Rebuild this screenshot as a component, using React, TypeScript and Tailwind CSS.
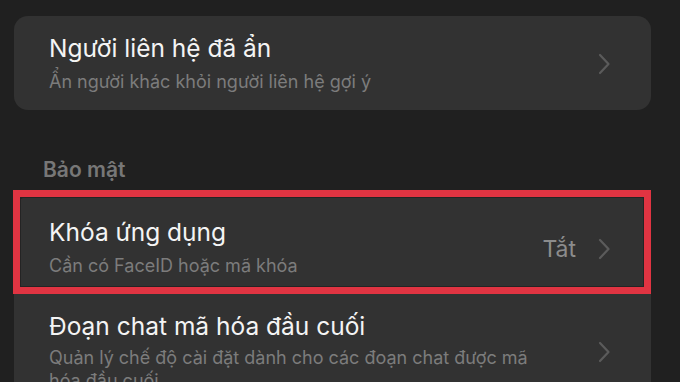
import React from "react";

function Chevron() {
  return (
    <svg width="14" height="22" viewBox="0 0 14 22" fill="none" className="shrink-0">
      <path d="M3 2 L11.5 11 L3 20" stroke="#5b5b5b" strokeWidth="2.2" strokeLinecap="round" strokeLinejoin="round" />
    </svg>
  );
}

export default function App() {
  return (
    <div
      className="w-[680px] h-[382px] overflow-hidden bg-[#202020] pt-[16px]"
      style={{ fontFamily: "Inter, 'Noto Sans', sans-serif" }}
    >
      {/* Card 1 */}
      <div className="ml-[14px] w-[637px] rounded-[14px] bg-[#323232] flex items-center pl-[35px] pr-[40px] pt-[17px] pb-[16px]">
        <div className="flex-1 flex flex-col">
          <div className="text-[24.5px] leading-[30px] text-[#f4f4f4]">Người liên hệ đã ẩn</div>
          <div className="mt-[7px] text-[18px] leading-[24px] text-[#7c7c7c]">Ẩn người khác khỏi người liên hệ gợi ý</div>
        </div>
        <Chevron />
      </div>

      {/* Section header */}
      <div className="mt-[48px] mb-[15px] pl-[43px] text-[21px] leading-[24px] font-semibold text-[#777777]">Bảo mật</div>

      {/* Card 2 */}
      <div className="ml-[14px] w-[637px] rounded-[14px] bg-[#323232] flex flex-col">
        <div className="relative flex items-center pl-[35px] pr-[40px] pt-[20px] pb-[16px]">
          <div className="flex-1 flex flex-col">
            <div className="text-[24.5px] leading-[30px] text-[#f4f4f4]">Khóa ứng dụng</div>
            <div className="mt-[7px] text-[18px] leading-[24px] text-[#7c7c7c]">Cần có FaceID hoặc mã khóa</div>
          </div>
          <div className="flex items-center gap-[21px] mt-[2px]">
            <span className="text-[23px] leading-[28px] text-[#8c8c8c]">Tắt</span>
            <Chevron />
          </div>
          <div className="absolute top-[-7px] left-[-1px] right-0 bottom-0 border-[7px] border-[#e03442] shadow-[inset_0_0_0_1px_#242424]" />
        </div>
        <div className="flex items-center pl-[35px] pr-[40px] pt-[17px] pb-[16px]">
          <div className="flex-1 flex flex-col">
            <div className="text-[24.5px] leading-[30px] text-[#f4f4f4]">Đoạn chat mã hóa đầu cuối</div>
            <div className="mt-[5px] w-[515px] text-[18px] leading-[23px] text-[#7c7c7c]">Quản lý chế độ cài đặt dành cho các đoạn chat được mã hóa đầu cuối</div>
          </div>
          <Chevron />
        </div>
      </div>
    </div>
  );
}
